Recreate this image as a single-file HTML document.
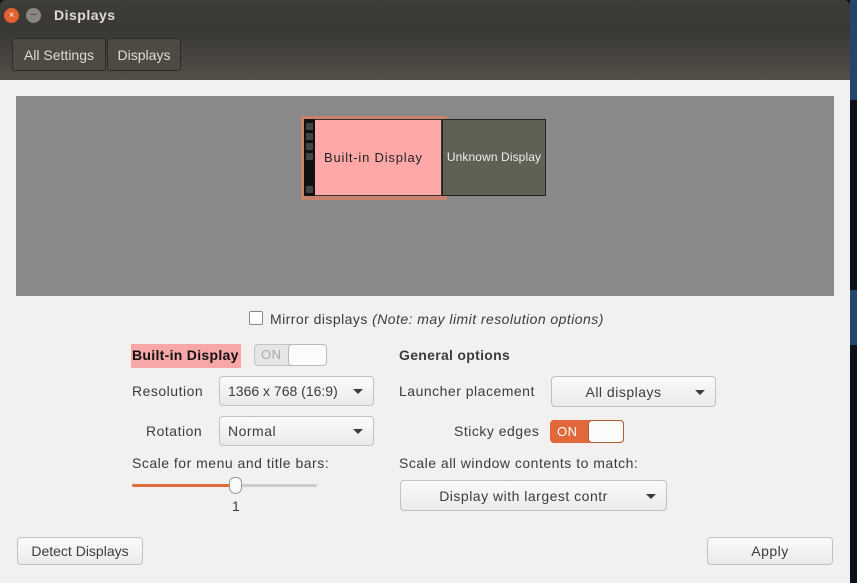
<html><head><style>
body{margin:0;width:857px;height:583px;overflow:hidden;background:#0d111a;font-family:"Liberation Sans",sans-serif;font-size:14px;color:#3c3c3c;position:relative;letter-spacing:.5px}
.a{position:absolute;white-space:nowrap}
.btn{position:absolute;border:1px solid #c4c2bf;border-radius:4px;background:linear-gradient(#fbfbfa,#eceae8);box-sizing:border-box;font-size:14px;color:#3c3c3c;display:flex;align-items:center;white-space:nowrap}
.arr{position:absolute;right:10px;top:50%;margin-top:-2px;border-left:5px solid transparent;border-right:5px solid transparent;border-top:5px solid #3c3c3c}
</style></head><body>
<div class="a" style="left:850px;top:0;width:7px;height:100px;background:#25466c"></div>
<div class="a" style="left:850px;top:290px;width:7px;height:55px;background:#25466c"></div>
<div class="a" style="left:0;top:0;width:850px;height:32px;background:linear-gradient(#3f3d39,#3a3834);border-radius:6px 6px 0 0"></div>
<div class="a" style="left:4px;top:8px;width:15px;height:15px;border-radius:50%;background:#e5602f;color:#fff;font-size:10px;text-align:center;line-height:15px;letter-spacing:0">×</div>
<div class="a" style="left:26px;top:8px;width:15px;height:15px;border-radius:50%;background:#8a8680;color:#333;font-size:10px;text-align:center;line-height:14px;letter-spacing:0">–</div>
<div class="a" style="left:54px;top:7px;color:#dfdbd2;font-weight:bold;font-size:14px">Displays</div>
<div class="a" style="left:0;top:32px;width:850px;height:48px;background:linear-gradient(#3b3935,#524e48)"></div>
<div class="a" style="left:12px;top:38px;width:94px;height:33px;border:1px solid #2e2c29;border-radius:3px;background:#4d4a44;color:#dfdbd2;line-height:33px;text-align:center;box-sizing:border-box;letter-spacing:0">All Settings</div>
<div class="a" style="left:107px;top:38px;width:74px;height:33px;border:1px solid #2e2c29;border-radius:3px;background:#4d4a44;color:#dfdbd2;line-height:33px;text-align:center;box-sizing:border-box;letter-spacing:0">Displays</div>
<div class="a" style="left:0;top:80px;width:850px;height:503px;background:#f2f1f0"></div>
<div class="a" style="left:16px;top:96px;width:818px;height:200px;background:#898989"></div>
<div class="a" style="left:301px;top:116px;width:146px;height:84px;background:#d2826a;opacity:.9"></div>
<div class="a" style="left:304px;top:119px;width:138px;height:77px;background:#ffa8a8;border:1px solid #333;box-sizing:border-box"></div>
<div class="a" style="left:304px;top:119px;width:11px;height:77px;background:#111"></div>
<div class="a" style="left:306px;top:123px;width:7px;height:7px;background:#444"></div>
<div class="a" style="left:306px;top:133px;width:7px;height:7px;background:#444"></div>
<div class="a" style="left:306px;top:143px;width:7px;height:7px;background:#444"></div>
<div class="a" style="left:306px;top:153px;width:7px;height:7px;background:#444"></div>
<div class="a" style="left:306px;top:186px;width:7px;height:7px;background:#444"></div>
<div class="a" style="left:324px;top:150px;font-size:13px;color:#222;letter-spacing:.8px">Built-in Display</div>
<div class="a" style="left:442px;top:119px;width:104px;height:77px;background:#5f6155;border:1px solid #222;box-sizing:border-box;color:#eee;font-size:12px;text-align:center;line-height:75px;letter-spacing:.1px">Unknown Display</div>
<div class="a" style="left:249px;top:311px;width:14px;height:14px;border:1px solid #888;border-radius:2px;background:#fff;box-sizing:border-box"></div>
<div class="a" style="left:270px;top:311px;letter-spacing:.45px">Mirror displays <i>(Note: may limit resolution options)</i></div>
<div class="a" style="left:131px;top:344px;width:110px;height:24px;background:#f7a7a7"></div>
<div class="a" style="left:132px;top:347px;font-weight:bold;color:#111;letter-spacing:.3px">Built-in Display</div>
<div class="a" style="left:254px;top:344px;width:73px;height:22px;border:1px solid #c4c2bf;border-radius:4px;background:#e8e6e4;box-sizing:border-box;color:#aaa;font-size:13px;line-height:20px;padding-left:6px">ON</div>
<div class="a" style="left:288px;top:344px;width:39px;height:22px;border:1px solid #bbb;border-radius:4px;background:#fbfbfa;box-sizing:border-box"></div>
<div class="a" style="left:399px;top:347px;font-weight:bold;letter-spacing:.3px">General options</div>
<div class="a" style="left:132px;top:383px">Resolution</div>
<div class="btn" style="left:219px;top:376px;width:155px;height:30px;padding-left:8px;letter-spacing:0">1366 x 768 (16:9)<span class="arr"></span></div>
<div class="a" style="left:146px;top:423px">Rotation</div>
<div class="btn" style="left:219px;top:416px;width:155px;height:30px;padding-left:8px">Normal<span class="arr"></span></div>
<div class="a" style="left:132px;top:455px">Scale for menu and title bars:</div>
<div class="a" style="left:132px;top:484px;width:185px;height:3px;border-radius:2px;background:#cfcdca"></div>
<div class="a" style="left:132px;top:484px;width:104px;height:3px;border-radius:2px;background:#e06a3c"></div>
<div class="a" style="left:229px;top:477px;width:13px;height:17px;border:1px solid #999;border-radius:6px 6px 7px 7px;background:#fafafa;box-sizing:border-box"></div>
<div class="a" style="left:232px;top:498px">1</div>
<div class="a" style="left:399px;top:383px">Launcher placement</div>
<div class="btn" style="left:551px;top:376px;width:165px;height:31px;justify-content:center;padding-right:20px">All displays<span class="arr"></span></div>
<div class="a" style="left:454px;top:423px">Sticky edges</div>
<div class="a" style="left:550px;top:420px;width:74px;height:23px;border-radius:4px;background:#e0683a;color:#fff;font-size:13px;line-height:23px;padding-left:7px;box-sizing:border-box">ON</div>
<div class="a" style="left:588px;top:420px;width:36px;height:23px;border:1px solid #b65a35;border-radius:4px;background:#fbfbfa;box-sizing:border-box"></div>
<div class="a" style="left:399px;top:455px">Scale all window contents to match:</div>
<div class="btn" style="left:400px;top:480px;width:267px;height:31px;justify-content:center;padding-right:20px">Display with largest contr<span class="arr"></span></div>
<div class="btn" style="left:17px;top:537px;width:126px;height:28px;justify-content:center;letter-spacing:0">Detect Displays</div>
<div class="btn" style="left:707px;top:537px;width:126px;height:28px;justify-content:center">Apply</div>
</body></html>
